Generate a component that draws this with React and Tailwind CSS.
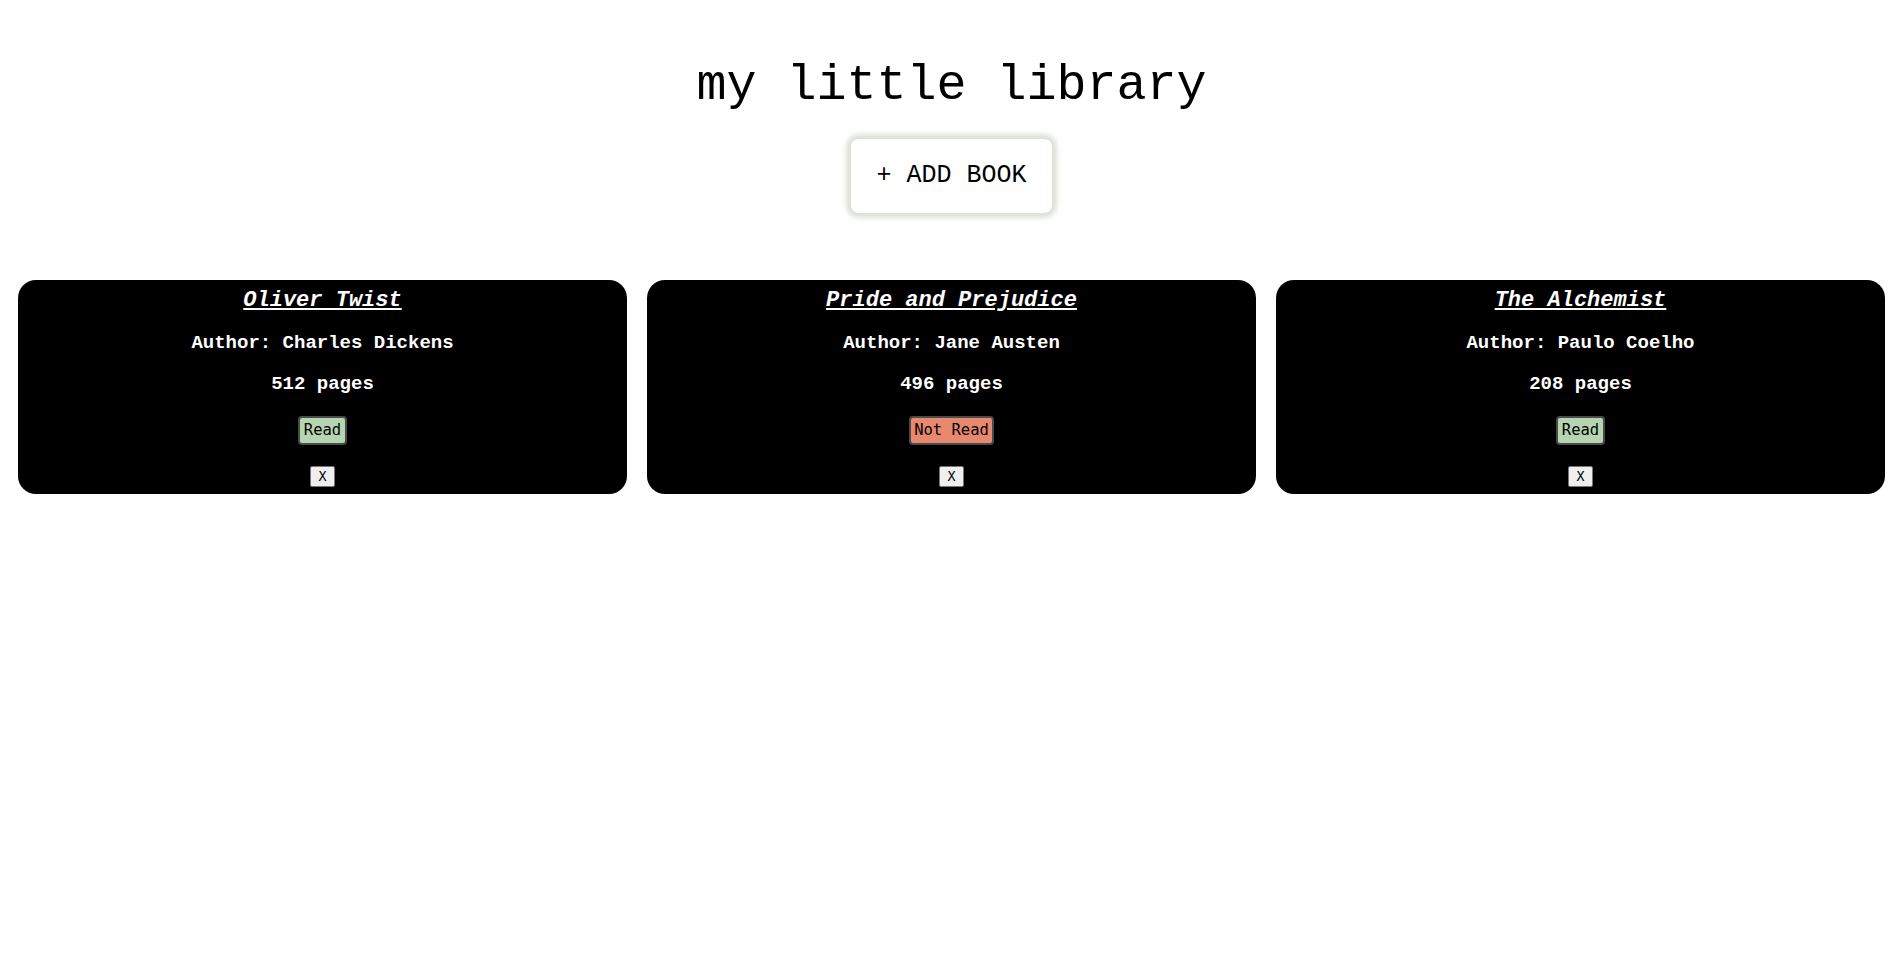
import React from "react";

const books = [
  { title: "Oliver Twist", author: "Charles Dickens", pages: 512, read: true },
  { title: "Pride and Prejudice", author: "Jane Austen", pages: 496, read: false },
  { title: "The Alchemist", author: "Paulo Coelho", pages: 208, read: true },
];

export default function App() {
  return (
    <div className="min-h-screen bg-white text-black font-['Liberation_Mono',monospace]">
      <div className="flex flex-col items-center pt-[58px]">
        <h1 className="text-[50px] leading-[1.1333] font-normal text-black">my little library</h1>
        <button className="mt-[24px] px-[25px] py-[23px] text-[25px] leading-[1.1333] bg-white rounded-[8px] shadow-[0_0_5px_5px_#dce1d9] text-black">
          + ADD BOOK
        </button>
      </div>
      <div className="grid grid-cols-3 gap-[20px] px-[18px] mt-[67px]">
        {books.map((b) => (
          <div key={b.title} className="bg-black rounded-[18px] text-white flex flex-col items-center pt-[9px] pb-[7px]">
            <div className="text-[22px] leading-[1.1333] font-bold italic underline">{b.title}</div>
            <div className="mt-[19.5px] text-[19px] leading-[1.1333] font-bold">Author: {b.author}</div>
            <div className="mt-[19.5px] text-[19px] leading-[1.1333] font-bold">{b.pages} pages</div>
            <button
              className={
                "mt-[20px] font-['DejaVu_Sans_Mono',monospace] text-[15.5px] leading-[1.164] px-[3.5px] py-[3.5px] border-2 border-[#4a4a4a] rounded-[4px] text-black " +
                (b.read ? "bg-[#b5d5b1]" : "bg-[#e8886e]")
              }
            >
              {b.read ? "Read" : "Not Read"}
            </button>
            <button className="mt-[21px] font-['DejaVu_Sans_Mono',monospace] text-[13.33px] leading-[1.164] px-[7px] py-[1.5px] bg-[#efefef] border border-[#767676] rounded-[2px] text-black">
              X
            </button>
          </div>
        ))}
      </div>
    </div>
  );
}
